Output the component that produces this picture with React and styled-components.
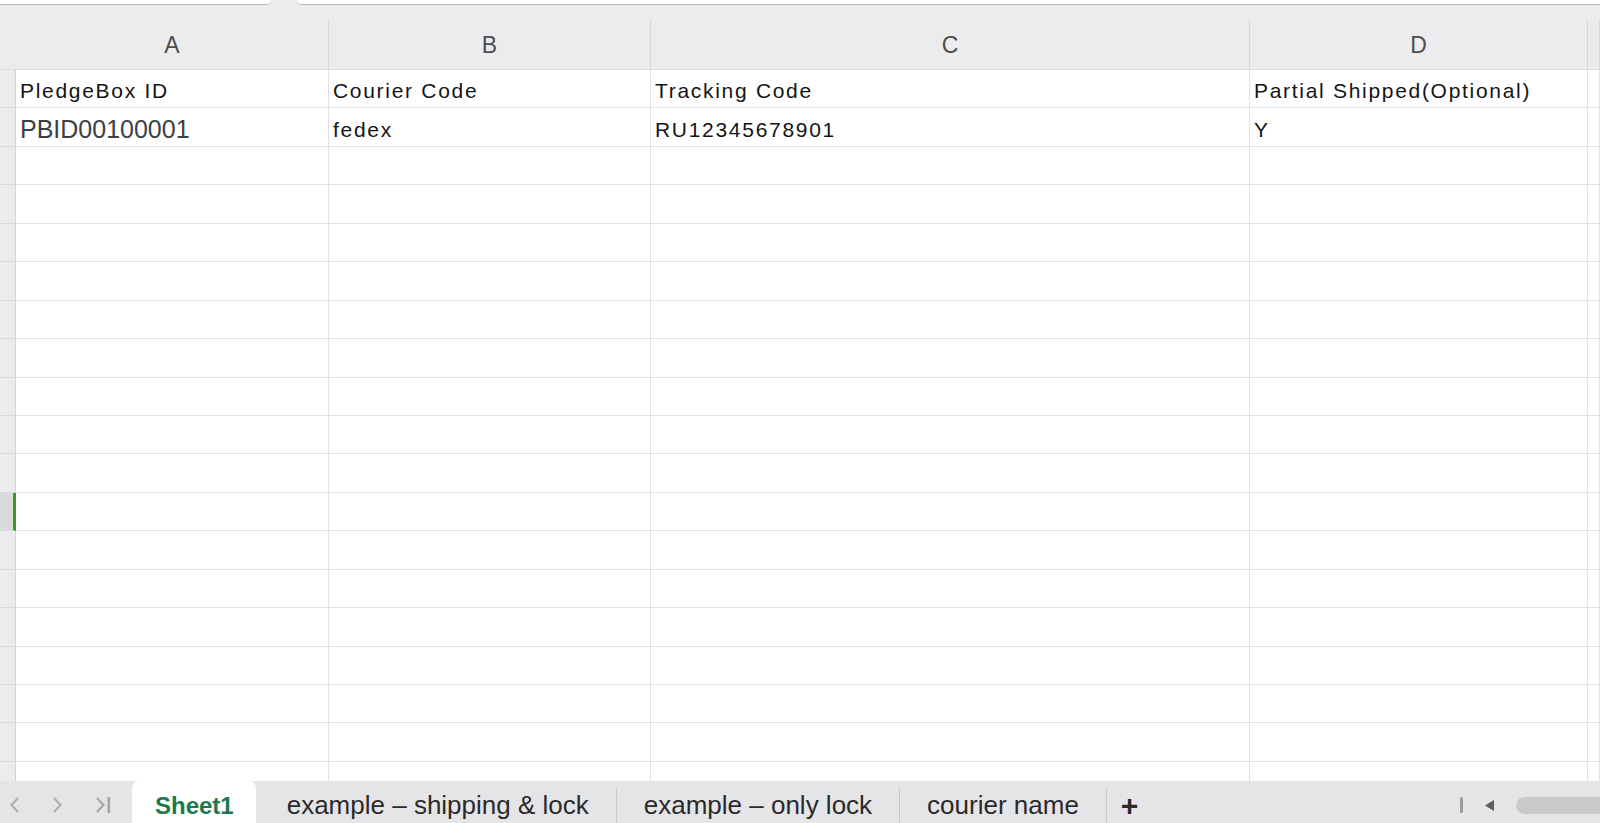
import React from 'react'
import styled, { createGlobalStyle } from 'styled-components'

const GlobalStyle = createGlobalStyle`
  html, body {
    margin: 0;
    padding: 0;
    background: #ffffff;
  }
  body {
    font-family: "Liberation Sans", Arial, sans-serif;
  }
`

const COLS = '16px 313px 322px 599px 338px 1fr'
const ROW_H = 38.44

const rows = [
  ['PledgeBox ID', 'Courier Code', 'Tracking Code', 'Partial Shipped(Optional)'],
  ['PBID00100001', 'fedex', 'RU12345678901', 'Y'],
]
const emptyRows = 19
const selectedRow = 11

const tabs = ['Sheet1', 'example – shipping & lock', 'example – only lock', 'courier name']

const App = () => {
  const allRows = [...rows]
  for (let i = 0; i < emptyRows; i++) allRows.push(['', '', '', ''])

  return (
    <Page>
      <GlobalStyle />
      <TopBar>
        <TopPanel $w="272px" />
        <TopPanel $grow />
      </TopBar>
      <ColHeader>
        <Corner />
        {['A', 'B', 'C', 'D', ''].map((l, i) => (
          <ColLetter key={i}>{l}</ColLetter>
        ))}
      </ColHeader>
      <SheetBody>
        {allRows.map((r, i) => (
          <Row key={i}>
            <RowHead $selected={i === selectedRow} />
            {r.map((c, j) => (
              <Cell key={j} $id={i === 1 && j === 0}>{c}</Cell>
            ))}
            <Cell />
          </Row>
        ))}
      </SheetBody>
      <TabBar>
        <NavGroup>
          <svg width="11" height="18" viewBox="0 0 11 18">
            <path d="M9 2 L2.5 9 L9 16" fill="none" stroke="#b0b0b2" strokeWidth="2.2" />
          </svg>
          <svg width="11" height="18" viewBox="0 0 11 18">
            <path d="M2 2 L8.5 9 L2 16" fill="none" stroke="#b0b0b2" strokeWidth="2.2" />
          </svg>
          <svg width="17" height="18" viewBox="0 0 17 18">
            <path d="M2 2 L8.5 9 L2 16" fill="none" stroke="#a6a6a8" strokeWidth="2.2" />
            <rect x="12.5" y="1" width="2.6" height="16" fill="#a6a6a8" />
          </svg>
        </NavGroup>
        {tabs.map((t, i) => (
          <Tab key={t} $active={i === 0} $sep={i > 1}>{t}</Tab>
        ))}
        <AddTab>+</AddTab>
        <Spacer />
        <ScrollArea>
          <Grip />
          <svg width="13" height="15" viewBox="0 0 13 15">
            <path d="M11 2 L2 7.5 L11 13 Z" fill="#5f5f61" />
          </svg>
          <Thumb />
        </ScrollArea>
      </TabBar>
    </Page>
  )
}

const Page = styled.div`
  display: flex;
  flex-direction: column;
  width: 1600px;
  height: 823px;
  overflow: hidden;
  background: #ececee;
`
const TopBar = styled.div`
  display: flex;
  gap: 24px;
  height: 19px;
  flex-shrink: 0;
  background: #ececee;
`
const TopPanel = styled.div`
  width: ${p => p.$w || 'auto'};
  flex: ${p => (p.$grow ? 1 : 'none')};
  height: 4px;
  background: #ffffff;
  border-bottom: 1.5px solid #b9b9bb;
  border-bottom-left-radius: ${p => (p.$grow ? '8px' : '0')};
  border-bottom-right-radius: ${p => (p.$grow ? '0' : '8px')};
`
const ColHeader = styled.div`
  display: grid;
  grid-template-columns: ${COLS};
  height: 51px;
  flex-shrink: 0;
  background: #ececee;
  border-bottom: 1px solid #dcdcde;
  box-sizing: border-box;
`
const Corner = styled.div``
const ColLetter = styled.div`
  display: flex;
  align-items: center;
  justify-content: center;
  border-right: 1px solid #d7d7d9;
  font-family: "Liberation Sans", Arial, sans-serif;
  font-size: 23px;
  color: #4c4c4e;
  padding-top: 2px;
`
const SheetBody = styled.div`
  flex: 1;
  overflow: hidden;
  background: #ffffff;
`
const Row = styled.div`
  display: grid;
  grid-template-columns: ${COLS};
  height: ${ROW_H}px;
`
const RowHead = styled.div`
  background: ${p => (p.$selected ? '#dadadc' : '#ececee')};
  border-bottom: 1px solid #d9d9db;
  border-right: ${p => (p.$selected ? '3px solid #3e9a1e' : '1px solid #d4d4d6')};
`
const Cell = styled.div`
  display: flex;
  align-items: center;
  padding: 5px 0 0 4px;
  border-right: 1px solid #e1e1e3;
  border-bottom: 1px solid #e1e1e3;
  white-space: nowrap;
  overflow: hidden;
  font-family: "Liberation Sans", Arial, sans-serif;
  font-size: ${p => (p.$id ? '25px' : '21px')};
  letter-spacing: ${p => (p.$id ? '0' : '1.7px')};
  color: ${p => (p.$id ? '#3b3f46' : '#141414')};
`
const TabBar = styled.div`
  display: flex;
  align-items: stretch;
  height: 42px;
  flex-shrink: 0;
  background: #e5e5e7;
`
const NavGroup = styled.div`
  display: flex;
  align-items: center;
  gap: 32px;
  width: 132px;
  padding: 6px 0 0 9px;
  box-sizing: border-box;
`
const Tab = styled.div`
  display: flex;
  align-items: center;
  padding: 7px ${p => (p.$active ? '22px' : '27px')} 0;
  font-size: ${p => (p.$active ? '24px' : '26px')};
  font-weight: ${p => (p.$active ? 700 : 400)};
  color: ${p => (p.$active ? '#1b7a4b' : '#2a2a2a')};
  background: ${p => (p.$active ? '#ffffff' : 'transparent')};
  border-radius: ${p => (p.$active ? '7px 7px 0 0' : '0')};
  border-left: 1px solid ${p => (p.$sep ? '#c9c9cb' : 'transparent')};
  margin-top: ${p => (p.$active ? '0' : '7px')};
  padding-top: ${p => (p.$active ? '7px' : '0')};
  white-space: nowrap;
  &:nth-child(3) {
    padding-left: 30px;
  }
`
const AddTab = styled.div`
  display: flex;
  align-items: center;
  padding: 0 12px 0 14px;
  margin-top: 7px;
  font-size: 30px;
  font-weight: 700;
  color: #2a2a2a;
  border-left: 1px solid #c9c9cb;
  line-height: 1;
`
const Spacer = styled.div`
  flex: 1;
`
const ScrollArea = styled.div`
  display: flex;
  align-items: center;
  gap: 20px;
  width: 140px;
  padding-top: 6px;
`
const Grip = styled.div`
  width: 3px;
  height: 16px;
  border-radius: 2px;
  background: #9c9c9e;
`
const Thumb = styled.div`
  flex: 1;
  height: 17px;
  border-radius: 9px 0 0 9px;
  background: #c9c9cb;
`

export default App
